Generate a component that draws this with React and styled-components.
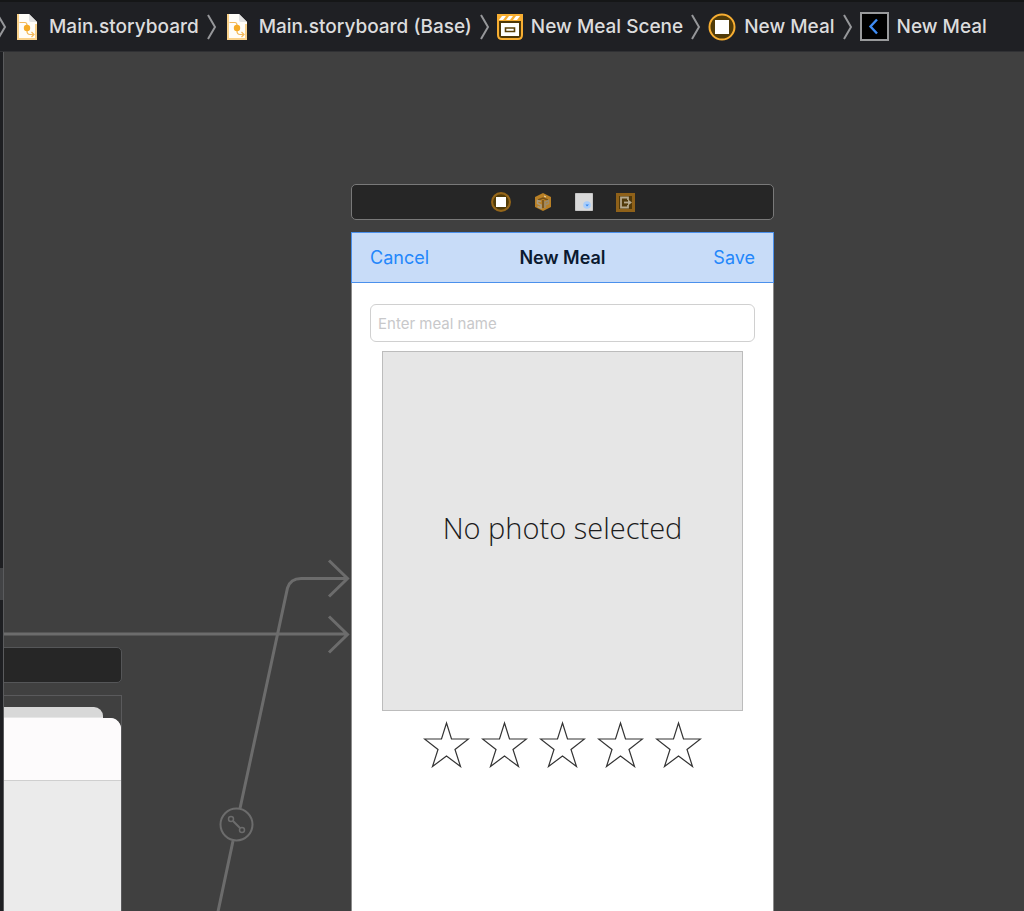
import React from 'react';
import styled, { createGlobalStyle } from 'styled-components';

const GlobalStyle = createGlobalStyle`
  *, *::before, *::after { box-sizing: border-box; }
  body { margin: 0; background: #404040; font-family: Inter, "Liberation Sans", sans-serif; }
  button, input { font: inherit; }
`;

const Window = styled.div`
  display: flex;
  flex-direction: column;
  height: 100vh;
  overflow: hidden;
`;

const JumpBar = styled.nav`
  flex: none;
  height: 52px;
  overflow: hidden;
  background: #1f2024;
  border-top: 2px solid #151617;
  border-bottom: 1px solid #303134;
`;

const Crumbs = styled.ol`
  display: flex;
  align-items: center;
  height: 100%;
  margin: 0;
  padding: 0;
  list-style: none;
`;

const Crumb = styled.li`
  display: flex;
  align-items: center;
  flex: none;
`;

const CrumbLink = styled.a`
  display: flex;
  align-items: center;
  gap: ${(p) => (p.$file ? 12 : 8)}px;
  padding-left: ${(p) => (p.$file ? 10 : 7)}px;
  color: #dcdcdd;
  font-size: 19px;
  line-height: 28px;
  font-weight: 500;
  text-decoration: none;
  white-space: nowrap;
`;

const Separator = styled.svg`
  width: 10px;
  height: 26px;
  margin-left: 8px;
  fill: none;
  stroke: #96979a;
  stroke-width: 2;
`;

const LeadSeparator = styled(Separator)`
  margin-left: -3px;
`;

const Icon = styled.svg`
  display: block;
  flex: none;
`;

const Editor = styled.div`
  display: flex;
  flex: 1;
  min-height: 0;
`;

const Divider = styled.div`
  flex: none;
  width: 4px;
  padding-top: 516px;
  background: #1e1f22;
  border-right: 1px solid #5a5b5d;
`;

const Grip = styled.div`
  height: 32px;
  background: #424345;
`;

const Canvas = styled.main`
  position: relative;
  flex: 1;
  min-width: 0;
  overflow: hidden;
  background: #404040;
`;

const Segues = styled.svg`
  position: absolute;
  left: 0;
  top: 0;
  fill: none;
  stroke: #6c6c6c;
  stroke-width: 3;
`;

const Scene = styled.section`
  position: absolute;
  left: ${(p) => p.$x}px;
  top: ${(p) => p.$y}px;
  bottom: 0;
  width: 423px;
  display: flex;
  flex-direction: column;
  gap: 12px;
`;

const Dock = styled.div`
  flex: none;
  display: flex;
  align-items: center;
  justify-content: center;
  gap: 23px;
  height: 36px;
  background: #262626;
  border: 1px solid ${(p) => (p.$dim ? '#555658' : '#797979')};
  border-radius: 5px;
`;

const DockButton = styled.button`
  display: flex;
  padding: 0;
  border: 0;
  background: none;
`;

const Screen = styled.div`
  flex: 1;
  display: flex;
  flex-direction: column;
  background: #fff;
  border: 0 solid #8c8c8c;
  border-width: 0 1px;
`;

const NavBar = styled.header`
  flex: none;
  display: grid;
  grid-template-columns: 1fr auto 1fr;
  align-items: center;
  height: 51px;
  margin: 0 -1px;
  padding: 0 18px;
  background: #c8dcf8;
  border: 1px solid #4a90ec;
`;

const Title = styled.h1`
  margin: 0;
  color: #0b1a30;
  font-size: 18px;
  line-height: 24px;
  font-weight: 600;
`;

const BarButton = styled.button`
  justify-self: ${(p) => p.$side};
  padding: 0;
  border: 0;
  background: none;
  color: #2487fb;
  font-size: 18px;
  line-height: 24px;
`;

const Form = styled.div`
  display: flex;
  flex-direction: column;
  align-items: center;
  padding: 21px 18px 0;
`;

const NameField = styled.input`
  width: 100%;
  height: 38px;
  padding: 0 7px;
  border: 1px solid #d0d0d0;
  border-radius: 6px;
  background: #fff;
  font-size: 15px;
  outline: 0;
  &::placeholder { color: #c8c8ca; opacity: 1; }
`;

const Photo = styled.button`
  width: 361px;
  height: 360px;
  margin-top: 9px;
  padding: 0 0 6px;
  border: 1px solid #bcbcbc;
  background: #e6e6e6;
  color: #1c1c1c;
  font-family: "Open Sans", "Noto Sans", sans-serif;
  font-size: 29px;
  line-height: 40px;
  font-weight: 300;
`;

const Rating = styled.div`
  display: flex;
  gap: 11px;
  margin-top: 10px;
`;

const StarButton = styled.button`
  display: flex;
  padding: 0;
  border: 0;
  background: none;
`;

const StackedScreen = styled.div`
  flex: 1;
  display: flex;
  flex-direction: column;
  padding-top: 11px;
  border: 1px solid #5a5a5c;
  border-bottom: 0;
`;

const BackCard = styled.div`
  flex: none;
  height: 11px;
  margin-right: 18px;
  background: #d8d8d8;
  border-bottom: 1px solid #e6e6e6;
  border-radius: 0 9px 0 0;
`;

const FrontCard = styled.div`
  flex: 1;
  background: #ebebeb;
  border-radius: 0 11px 0 0;
  overflow: hidden;
`;

const CardHeader = styled.div`
  height: 63px;
  background: #fdfbfc;
  border-bottom: 1px solid #cfcfcf;
`;

const StoryboardIcon = () => (
  <Icon width="20" height="26" viewBox="0 0 20 26" aria-hidden="true">
    <path d="M0 0h12l8 8v18H0z" fill="#fffdf8" />
    <path d="M1 0v25h18V10" fill="none" stroke="#f9d18a" strokeWidth="2" />
    <path d="M12 0l8 8h-6q-2 0-2-2z" fill="#e2e2e2" />
    <path d="M2.500 8.500H8q2 0 2 3V17q0 3.500 3 3.500h3.500M14.500 18l2.500 2.500-2.500 2.500" fill="none" stroke="#f3b95a" strokeWidth="1.200" />
    <circle cx="10" cy="14" r="3.200" fill="#f5ab25" />
  </Icon>
);

const SceneIcon = () => (
  <Icon width="26" height="26" viewBox="0 0 26 26" aria-hidden="true">
    <path d="M1 1h24v20q0 4-4 4H5q-4 0-4-4z" fill="#4d3708" stroke="#f7ae32" strokeWidth="2" />
    <path d="M0 0h26v7H0z" fill="#f7ae32" />
    <path d="M2 6l3-4h4L6 6zM9 6l3-4h4l-3 4zM16 6l3-4h4l-3 4z" fill="#fff" />
    <path d="M4 9h18v13H4z" fill="#fff" />
    <path d="M8.500 14h9v3.500h-9z" fill="#fff" stroke="#5a4008" strokeWidth="1.600" />
  </Icon>
);

const ControllerIcon = ({ size = 28, dim }) => (
  <Icon width={size} height={size} viewBox="0 0 28 28" aria-hidden="true">
    <circle cx="14" cy="14" r="12.500" fill="#513b09" stroke={dim ? '#956619' : '#f7ae32'} strokeWidth={dim ? 3 : 2} />
    <path d="M7 7h14v14H7z" fill="#fff" />
  </Icon>
);

const BackIcon = () => (
  <Icon width="29" height="29" viewBox="0 0 29 29" fill="none" aria-hidden="true">
    <path d="M1 1h27v27H1z" fill="#000" stroke="#999a9c" strokeWidth="2" />
    <path d="M17 7.500L10.500 14.500L17 21.500" stroke="#3e8cf5" strokeWidth="2.400" />
  </Icon>
);

const ResponderIcon = () => (
  <Icon width="18" height="18" viewBox="0 0 18 18" aria-hidden="true">
    <path d="M9 0l8 4v10l-8 4-8-4V4z" fill="#b98025" />
    <path d="M4 7l5-2 5 2M9 7v8" fill="none" stroke="#74501b" strokeWidth="1.600" />
    <path d="M7 8.500L3.500 7.500v3L7 12v3l-3.500-1.500" fill="none" stroke="#a89a80" strokeWidth="1.600" />
    <path d="M11 15V9l3.500-1.500v3L11 12" fill="none" stroke="#9a8a6c" strokeWidth="1.600" />
    <path d="M10 3l2 1" fill="none" stroke="#f0dcb8" />
  </Icon>
);

const ItemIcon = () => (
  <Icon width="18" height="18" viewBox="0 0 18 18" aria-hidden="true">
    <path d="M.5 .5h17v17H.5z" fill="#d9d9d9" stroke="#c6c6c6" />
    <circle cx="12" cy="12" r="3.800" fill="#a9cdfa" />
    <path d="M10.500 11.500h3.500l-2 2z" fill="#3185ef" />
  </Icon>
);

const ExitIcon = () => (
  <Icon width="19" height="19" viewBox="0 0 19 19" fill="none" aria-hidden="true">
    <path d="M1.500 1.500h16v16h-16z" fill="#513a0b" stroke="#8f6119" strokeWidth="3" />
    <path d="M12 7V4.500H5v10h7V12" stroke="#b5a88c" strokeWidth="1.800" />
    <path d="M8 9.500h5" stroke="#b5a88c" strokeWidth="1.800" />
    <path d="M12 6.500l4 3-4 3z" fill="#b5a88c" />
  </Icon>
);

const Star = () => (
  <svg width="47" height="47" viewBox="0 0 47 47" fill="none" stroke="#333" aria-hidden="true">
    <path d="M23.500 2l5 16H45.500L32 28.500l5.500 17-14-10.500-14 10.500 5.500-17L1.500 18H18.500z" strokeWidth="1.200" />
  </svg>
);

const crumbs = [
  { label: 'Main.storyboard', icon: <StoryboardIcon />, file: true },
  { label: 'Main.storyboard (Base)', icon: <StoryboardIcon />, file: true },
  { label: 'New Meal Scene', icon: <SceneIcon /> },
  { label: 'New Meal', icon: <ControllerIcon /> },
  { label: 'New Meal', icon: <BackIcon /> },
];

const dockItems = [
  { label: 'View Controller', icon: <ControllerIcon size={20} dim /> },
  { label: 'First Responder', icon: <ResponderIcon /> },
  { label: 'Bar Button Item', icon: <ItemIcon /> },
  { label: 'Exit', icon: <ExitIcon /> },
];

export default function App() {
  return (
    <Window>
      <GlobalStyle />
      <JumpBar aria-label="Jump bar">
        <Crumbs>
          {crumbs.map((c, i) => {
            const Sep = i === 0 ? LeadSeparator : Separator;
            return (
              <Crumb key={i}>
                <Sep viewBox="0 0 10 26" aria-hidden="true">
                  <path d="M1 1l7 12-7 12" />
                </Sep>
                <CrumbLink href="#" $file={c.file}>
                  {c.icon}
                  {c.label}
                </CrumbLink>
              </Crumb>
            );
          })}
        </Crumbs>
      </JumpBar>
      <Editor>
        <Divider>
          <Grip />
        </Divider>
        <Canvas>
          <Scene $x={-305} $y={595} aria-label="Navigation scene">
            <Dock $dim />
            <StackedScreen>
              <BackCard />
              <FrontCard>
                <CardHeader />
              </FrontCard>
            </StackedScreen>
          </Scene>
          <Segues width="348" height="859" viewBox="0 0 348 859" aria-hidden="true">
            <path d="M0 582h343M325 564.500l18.500 18-18.500 18" />
            <path d="M236 756.500L283.500 536Q286.500 526.500 297 526.500H343M325 508.500l18.500 18-18.500 18M229 789L213.500 862" />
            <circle cx="232.500" cy="772.500" r="16" strokeWidth="2" />
            <path d="M229 769l7 7" strokeWidth="2" />
            <circle cx="227" cy="767" r="2.500" strokeWidth="1.500" />
            <circle cx="238" cy="778" r="2.500" strokeWidth="1.500" />
          </Segues>
          <Scene $x={347} $y={132} aria-label="New Meal scene">
            <Dock>
              {dockItems.map((d) => (
                <DockButton key={d.label} type="button" aria-label={d.label}>
                  {d.icon}
                </DockButton>
              ))}
            </Dock>
            <Screen>
              <NavBar>
                <BarButton type="button" $side="start">Cancel</BarButton>
                <Title>New Meal</Title>
                <BarButton type="button" $side="end">Save</BarButton>
              </NavBar>
              <Form>
                <NameField type="text" placeholder="Enter meal name" aria-label="Meal name" />
                <Photo type="button">No photo selected</Photo>
                <Rating role="group" aria-label="Rating">
                  {[1, 2, 3, 4, 5].map((n) => (
                    <StarButton key={n} type="button" aria-label={`Rate ${n}`}>
                      <Star />
                    </StarButton>
                  ))}
                </Rating>
              </Form>
            </Screen>
          </Scene>
        </Canvas>
      </Editor>
    </Window>
  );
}
